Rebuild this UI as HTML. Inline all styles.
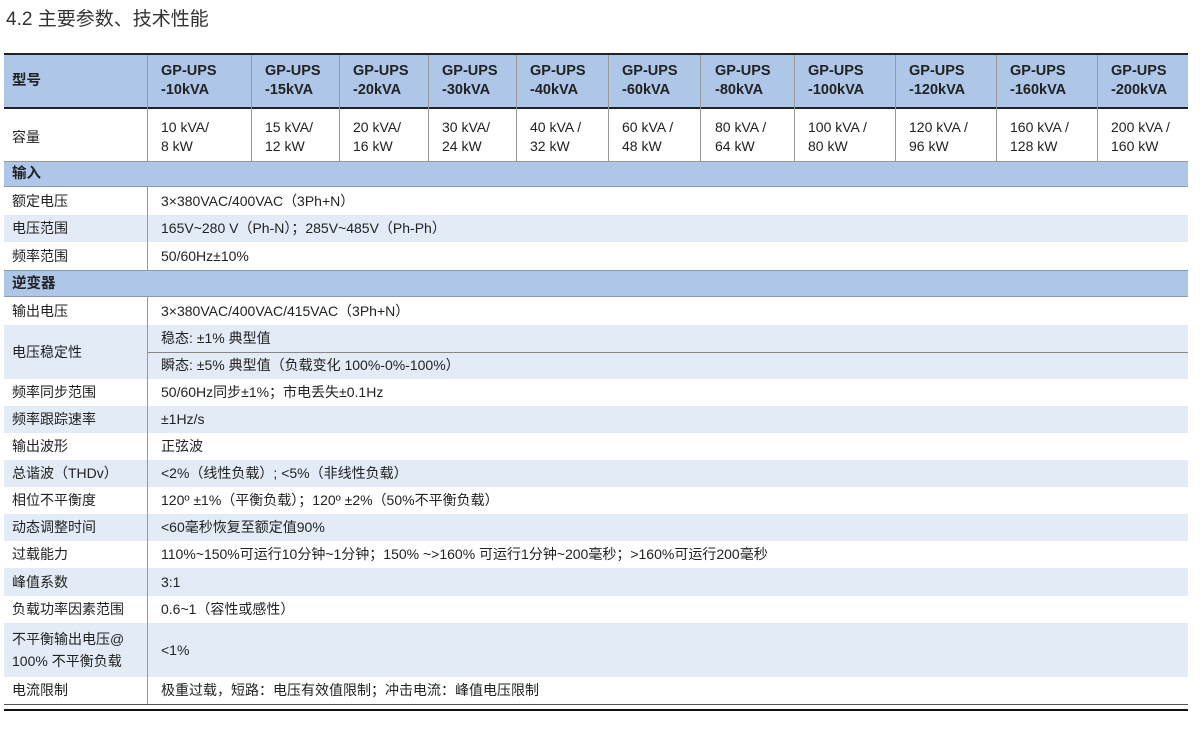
<!DOCTYPE html><html><head><meta charset="utf-8"><style>
*{margin:0;padding:0;box-sizing:border-box}
body{width:1200px;height:733px;background:#fff;position:relative;overflow:hidden;font-family:"Liberation Sans","Noto Sans CJK SC",sans-serif;color:#222;font-size:14px}
.a{position:absolute}
.t{position:absolute;left:6px;top:4px;font-size:19px;color:#333}
.row{position:absolute;left:4px;width:1184px}
.b{background:#aec7e8}.l{background:#e3ebf6}.w{background:#fff}
.lab{position:absolute;left:8px;white-space:nowrap;top:0}
.val{position:absolute;left:157px;white-space:nowrap;top:0}
.r27 span{line-height:27px}.r28 span{line-height:28px}
.hd{font-weight:bold;font-size:14.5px;line-height:19px}
.cap{line-height:19px}
</style></head><body>
<div class="t">4.2 主要参数、技术性能</div>
<div class="a" style="left:4px;top:53px;width:1184px;height:2px;background:#222"></div>
<div class="row b" style="top:55px;height:52px"></div>
<div class="a" style="left:4px;top:107px;width:1184px;height:2px;background:#222"></div>
<div class="row w" style="top:109px;height:52px"></div>
<div class="a" style="left:4px;top:161px;width:1184px;height:1px;background:#999"></div>
<div class="lab a hd" style="left:12px;top:72px">型号</div>
<div class="lab a" style="left:12px;top:127px">容量</div>
<div class="a" style="left:147px;top:55px;width:1px;height:106px;background:#999"></div>
<div class="a" style="left:251px;top:55px;width:1px;height:106px;background:#999"></div>
<div class="a" style="left:339px;top:55px;width:1px;height:106px;background:#999"></div>
<div class="a" style="left:428px;top:55px;width:1px;height:106px;background:#999"></div>
<div class="a" style="left:516px;top:55px;width:1px;height:106px;background:#999"></div>
<div class="a" style="left:608px;top:55px;width:1px;height:106px;background:#999"></div>
<div class="a" style="left:700px;top:55px;width:1px;height:106px;background:#999"></div>
<div class="a" style="left:794px;top:55px;width:1px;height:106px;background:#999"></div>
<div class="a" style="left:895px;top:55px;width:1px;height:106px;background:#999"></div>
<div class="a" style="left:996px;top:55px;width:1px;height:106px;background:#999"></div>
<div class="a" style="left:1097px;top:55px;width:1px;height:106px;background:#999"></div>
<div class="a hd" style="left:161px;top:62px">GP-UPS<br>-10kVA</div>
<div class="a hd" style="left:265px;top:62px">GP-UPS<br>-15kVA</div>
<div class="a hd" style="left:353px;top:62px">GP-UPS<br>-20kVA</div>
<div class="a hd" style="left:442px;top:62px">GP-UPS<br>-30kVA</div>
<div class="a hd" style="left:530px;top:62px">GP-UPS<br>-40kVA</div>
<div class="a hd" style="left:622px;top:62px">GP-UPS<br>-60kVA</div>
<div class="a hd" style="left:715px;top:62px">GP-UPS<br>-80kVA</div>
<div class="a hd" style="left:808px;top:62px">GP-UPS<br>-100kVA</div>
<div class="a hd" style="left:909px;top:62px">GP-UPS<br>-120kVA</div>
<div class="a hd" style="left:1010px;top:62px">GP-UPS<br>-160kVA</div>
<div class="a hd" style="left:1111px;top:62px">GP-UPS<br>-200kVA</div>
<div class="a cap" style="left:161px;top:118px">10 kVA/<br>8 kW</div>
<div class="a cap" style="left:265px;top:118px">15 kVA/<br>12 kW</div>
<div class="a cap" style="left:353px;top:118px">20 kVA/<br>16 kW</div>
<div class="a cap" style="left:442px;top:118px">30 kVA/<br>24 kW</div>
<div class="a cap" style="left:530px;top:118px">40 kVA /<br>32 kW</div>
<div class="a cap" style="left:622px;top:118px">60 kVA /<br>48 kW</div>
<div class="a cap" style="left:715px;top:118px">80 kVA /<br>64 kW</div>
<div class="a cap" style="left:808px;top:118px">100 kVA /<br>80 kW</div>
<div class="a cap" style="left:909px;top:118px">120 kVA /<br>96 kW</div>
<div class="a cap" style="left:1010px;top:118px">160 kVA /<br>128 kW</div>
<div class="a cap" style="left:1111px;top:118px">200 kVA /<br>160 kW</div>

<div class="row b" style="top:162px;height:25px;border-bottom:1px solid #8a9bb0"><span class="lab hd" style="top:3px">输入</span></div>
<div class="row w r28" style="top:187px;height:28px"><span class="lab">额定电压</span><span class="val">3×380VAC/400VAC（3Ph+N）</span></div>
<div class="row l r27" style="top:215px;height:27px"><span class="lab">电压范围</span><span class="val">165V~280 V（Ph-N）；285V~485V（Ph-Ph）</span></div>
<div class="row w r28" style="top:242px;height:28px"><span class="lab">频率范围</span><span class="val">50/60Hz±10%</span></div>
<div class="row b" style="top:270px;height:27px;border-top:1px solid #8a9bb0;border-bottom:1px solid #8a9bb0"><span class="lab hd" style="top:4px">逆变器</span></div>
<div class="row w r28" style="top:297px;height:28px"><span class="lab">输出电压</span><span class="val">3×380VAC/400VAC/415VAC（3Ph+N）</span></div>
<div class="row l" style="top:325px;height:54px"><span class="lab" style="line-height:54px">电压稳定性</span><span class="val" style="line-height:27px">稳态: ±1% 典型值</span><span class="val" style="top:27px;line-height:27px">瞬态: ±5% 典型值（负载变化 100%-0%-100%）</span></div>
<div class="a" style="left:147px;top:352px;width:1041px;height:1px;background:#888"></div>
<div class="row w r27" style="top:379px;height:27px"><span class="lab">频率同步范围</span><span class="val">50/60Hz同步±1%；市电丢失±0.1Hz</span></div>
<div class="row l r27" style="top:406px;height:27px"><span class="lab">频率跟踪速率</span><span class="val">±1Hz/s</span></div>
<div class="row w r27" style="top:433px;height:27px"><span class="lab">输出波形</span><span class="val">正弦波</span></div>
<div class="row l r27" style="top:460px;height:27px"><span class="lab">总谐波（THDv）</span><span class="val">&lt;2%（线性负载）; &lt;5%（非线性负载）</span></div>
<div class="row w r27" style="top:487px;height:27px"><span class="lab">相位不平衡度</span><span class="val">120º ±1%（平衡负载）；120º ±2%（50%不平衡负载）</span></div>
<div class="row l r27" style="top:514px;height:27px"><span class="lab">动态调整时间</span><span class="val">&lt;60毫秒恢复至额定值90%</span></div>
<div class="row w r27" style="top:541px;height:27px"><span class="lab">过载能力</span><span class="val">110%~150%可运行10分钟~1分钟；150% ~&gt;160% 可运行1分钟~200毫秒；&gt;160%可运行200毫秒</span></div>
<div class="row l r28" style="top:568px;height:28px"><span class="lab">峰值系数</span><span class="val">3:1</span></div>
<div class="row w r27" style="top:596px;height:27px"><span class="lab">负载功率因素范围</span><span class="val">0.6~1（容性或感性）</span></div>
<div class="row l" style="top:623px;height:54px"><span class="lab" style="top:5px;line-height:22px">不平衡输出电压@<br>100% 不平衡负载</span><span class="val" style="line-height:54px">&lt;1%</span></div>
<div class="row w r27" style="top:677px;height:27px"><span class="lab">电流限制</span><span class="val">极重过载，短路：电压有效值限制；冲击电流：峰值电压限制</span></div>
<div class="a" style="left:147px;top:187px;width:1px;height:83px;background:#999"></div>
<div class="a" style="left:147px;top:297px;width:1px;height:407px;background:#999"></div>
<div class="a" style="left:4px;top:704px;width:1184px;height:1px;background:#555"></div>
<div class="a" style="left:4px;top:709px;width:1184px;height:2px;background:#111"></div>
</body></html>
